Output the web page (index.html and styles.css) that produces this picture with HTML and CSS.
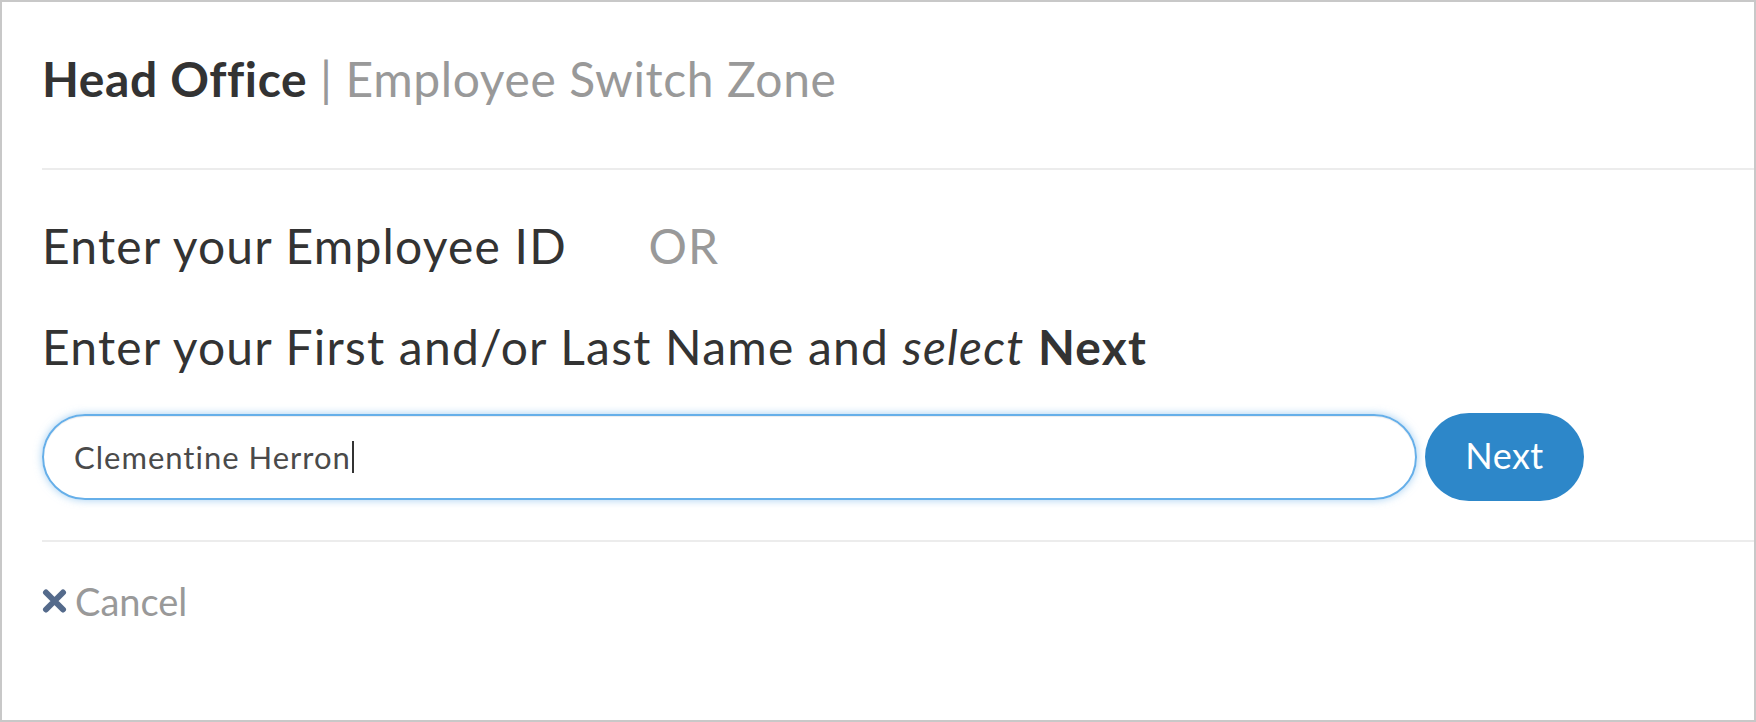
FILE: index.html
```html
<!DOCTYPE html>
<html lang="en">
<head>
  <meta charset="UTF-8" />
  <meta name="viewport" content="width=device-width, initial-scale=1.0"/>
  <title>Employee Switch Zone</title>
  <link rel="stylesheet" href="styles.css">
</head>
<body>
  <div class="frame">
    <header class="top">
      <h1><strong>Head Office</strong> <span class="sub">| Employee Switch Zone</span></h1>
    </header>

    <section class="search">
      <p class="line">Enter your Employee ID <span class="or">OR</span></p>
      <p class="line">Enter your First and/or Last Name and <em>select</em> <strong>Next</strong></p>
      <div class="row">
        <div class="field">Clementine Herron<span class="caret"></span></div>
        <button class="next">Next</button>
      </div>
    </section>

    <footer class="bottom">
      <a class="cancel" href="#">
        <svg width="25" height="24" viewBox="0 0 25 24">
          <path d="M4 3.5 L21 20.5 M21 3.5 L4 20.5" stroke="#546a8b" stroke-width="6" stroke-linecap="round"/>
        </svg>
        Cancel
      </a>
    </footer>
  </div>
</body>
</html>
```

FILE: styles.css
```css
html, body { margin: 0; padding: 0; background: #fff; }
body { font-family: Lato, "Noto Sans", sans-serif; color: #333; }

.frame {
  box-sizing: border-box; width: 1756px; height: 722px;
  border: 2px solid #c8c8c8; background: #fff; overflow: hidden;
}

.top { margin-left: 40px; padding: 49px 0 61px; border-bottom: 2px solid #ececec; }
h1 { margin: 0; font-size: 48px; line-height: 56px; font-weight: 400; letter-spacing: 0.6px; }
h1 strong { font-weight: 700; color: #333; }
h1 .sub { color: #999; }

.search { margin-left: 40px; padding-top: 48px; padding-bottom: 39px; border-bottom: 2px solid #ececec; }
.line { margin: 0 0 45px; font-size: 48px; line-height: 56px; color: #333; letter-spacing: 1.2px; }
.line + .line { margin-bottom: 38px; }
.line em { font-style: italic; }
.line strong { font-weight: 700; }
.or { color: #999; margin-left: 68px; }

.row { display: flex; align-items: center; gap: 8px; }
.field {
  box-sizing: border-box; width: 1375px; height: 86px; padding: 0 30px;
  display: flex; align-items: center;
  border: 2px solid #66afe9; border-radius: 43px;
  box-shadow: inset 0 1px 1px rgba(0,0,0,.075), 0 0 8px rgba(102,175,233,.6);
  font-size: 31px; color: #4a4a4a; letter-spacing: 1px;
}
.caret { display: inline-block; width: 2px; height: 32px; background: #333; margin-left: 1px; }
.next {
  width: 159px; height: 88px; padding: 0 0 4px; border: 0; border-radius: 44px;
  background: #2d87c9; color: #fff; font-family: inherit; font-size: 36px;
  letter-spacing: 0.5px; cursor: pointer;
}

.bottom { margin-left: 40px; padding-top: 36px; }
.cancel {
  display: inline-flex; align-items: center; gap: 8px;
  font-size: 38px; line-height: 46px; color: #999; text-decoration: none;
}
```
